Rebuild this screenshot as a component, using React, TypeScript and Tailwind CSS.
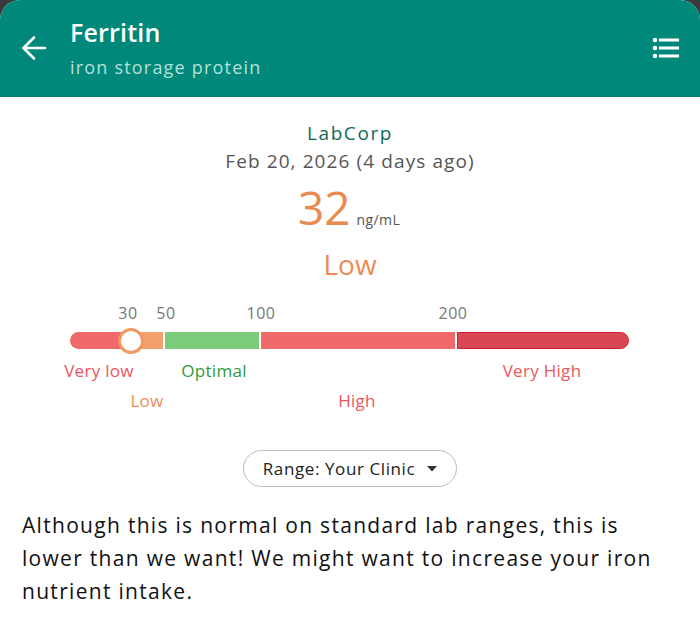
import React from "react";

const ticks = [
  { v: "30", x: 128 },
  { v: "50", x: 166 },
  { v: "100", x: 261 },
  { v: "200", x: 453 },
];

const labels = [
  { t: "Very low", x: 99, row: 0, c: "text-[#ee5560]" },
  { t: "Optimal", x: 214, row: 0, c: "text-[#2e9a3c]" },
  { t: "Very High", x: 542, row: 0, c: "text-[#ee5560]" },
  { t: "Low", x: 147, row: 1, c: "text-[#ee8d5a]" },
  { t: "High", x: 357, row: 1, c: "text-[#ee5560]" },
];

export default function App() {
  return (
    <div
      className="w-[700px] h-[626px] bg-[#3a3a3a]"
      style={{ fontFamily: '"Open Sans", "Liberation Sans", sans-serif' }}
    >
      <div className="h-full rounded-t-[20px] overflow-hidden bg-white flex flex-col">
        <header className="h-[97px] bg-[#00897b] border-b border-[#0b7d70] flex items-start shrink-0">
          <div className="w-[70px] h-full flex items-center justify-center">
            <svg width="28" height="28" viewBox="0 0 28 28" className="ml-[-2px]">
              <path
                d="M25 14H4M14 3.5 3.5 14 14 24.5"
                fill="none"
                stroke="white"
                strokeWidth="2.6"
                strokeLinecap="round"
                strokeLinejoin="round"
              />
            </svg>
          </div>
          <div className="flex-1 pt-[16px] flex flex-col">
            <div className="text-white text-[25px] leading-[33px] font-semibold tracking-[0.2px]">Ferritin</div>
            <div className="text-[#b4e0da] text-[18px] leading-[26px] mt-[5px] font-medium tracking-[1.2px]">
              iron storage protein
            </div>
          </div>
          <div className="w-[70px] h-full flex items-center justify-center pl-[2px]">
            <svg width="28" height="22" viewBox="0 0 28 22">
              <circle cx="3" cy="3" r="2.3" fill="white" />
              <circle cx="3" cy="11" r="2.3" fill="white" />
              <circle cx="3" cy="19" r="2.3" fill="white" />
              <rect x="7" y="1.5" width="20" height="3" fill="white" />
              <rect x="7" y="9.5" width="20" height="3" fill="white" />
              <rect x="7" y="17.5" width="20" height="3" fill="white" />
            </svg>
          </div>
        </header>

        <main className="flex flex-col items-center">
          <div className="mt-[22px] text-[19px] leading-[28px] text-[#0f6b57] tracking-[1.6px]">LabCorp</div>
          <div className="text-[19px] leading-[28px] text-[#555555] tracking-[1.1px]">Feb 20, 2026 (4 days ago)</div>
          <div className="mt-[2px] h-[60px] flex items-baseline gap-[6px] text-[#e98b50] mr-[2px]">
            <span className="text-[46px] leading-[60px]">32</span>
            <span className="text-[14px] text-[#555555] tracking-[0.4px]">ng/mL</span>
          </div>
          <div className="mt-[9px] text-[28px] leading-[36px] text-[#ec8c55]">Low</div>

          <div className="relative w-[700px] h-[110px] mt-[19px]">
            {ticks.map((t) => (
              <span
                key={t.v}
                className="absolute top-0 -translate-x-1/2 text-[16px] leading-[24px] text-[#777777] tracking-[0.5px]"
                style={{ left: t.x }}
              >
                {t.v}
              </span>
            ))}
            <div className="absolute left-[70px] top-[31px] w-[559px] h-[17px] flex gap-[2px]">
              <div className="w-[58px] h-full bg-[#f06a6a] rounded-l-full" />
              <div className="w-[35px] h-full bg-[#f3a06c] -ml-[2px]" />
              <div className="w-[94px] h-full bg-[#7bcb7a]" />
              <div className="w-[194px] h-full bg-[#f06a6a]" />
              <div className="w-[172px] h-full bg-[#d84852] border border-[#cf1f33] rounded-r-full" />
            </div>
            <div
              className="absolute top-[27px] w-[26px] h-[26px] rounded-full bg-white border-[3.5px] border-[#f09a62] -translate-x-1/2"
              style={{ left: 131 }}
            />
            {labels.map((l) => (
              <span
                key={l.t}
                className={`absolute -translate-x-1/2 whitespace-nowrap text-[17px] leading-[24px] tracking-[0.3px] ${l.c}`}
                style={{ left: l.x, top: l.row === 0 ? 58 : 88 }}
              >
                {l.t}
              </span>
            ))}
          </div>

          <button className="mt-[39px] h-[37px] w-[214px] rounded-full border border-[#bdbdbd] flex items-center justify-center gap-[12px] text-[17px] tracking-[0.6px] text-[#222222] bg-white">
            <span>Range: Your Clinic</span>
            <svg width="10" height="6" viewBox="0 0 10 6">
              <path d="M0 0h10L5 5.5z" fill="#333333" />
            </svg>
          </button>
        </main>

        <p className="px-[22px] mt-[22px] text-[21px] leading-[33px] tracking-[1.3px] text-[#111111]">
          Although this is normal on standard lab ranges, this is lower than we want! We might want to increase your iron nutrient intake.
        </p>
      </div>
    </div>
  );
}
